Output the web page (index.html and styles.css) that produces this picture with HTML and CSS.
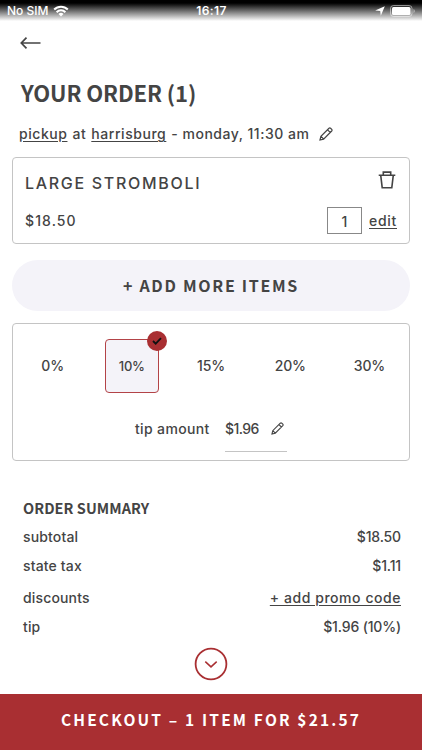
FILE: index.html
```html
<!DOCTYPE html>
<html lang="en">
<head>
    <meta charset="UTF-8">
    <meta name="viewport" content="width=device-width, initial-scale=1.0">
    <title>Your Order</title>
    <link rel="stylesheet" href="styles.css">
</head>
<body>

<!-- Status Bar -->
<div class="status-bar">
    <div class="status-left">
        <span>No SIM</span>
        <svg width="16" height="12" viewBox="0 0 16 12">
            <path d="M1.2 4.5a9.6 9.6 0 0 1 13.6 0M3.6 7.2a6.2 6.2 0 0 1 8.8 0" fill="none" stroke="#fff" stroke-width="2"/>
            <path d="M5.5 9.1a3.5 3.5 0 0 1 5 0L8 11.6z" fill="#fff"/>
        </svg>
    </div>
    <span class="status-time">16:17</span>
    <div class="status-right">
        <svg width="10" height="10" viewBox="0 0 10 10"><path d="M9.8.2L5.8 9.8 5.2 5 .2 4.6z" fill="#fff"/></svg>
        <svg width="26" height="12" viewBox="0 0 26 12">
            <rect x=".5" y=".5" width="21.5" height="11" rx="3" fill="none" stroke="#fff" stroke-opacity=".5"/>
            <rect x="2" y="2" width="18.5" height="8" rx="1.5" fill="#fff"/>
            <path d="M23.5 4v4q1.3-.6 1.3-2t-1.3-2z" fill="#fff" fill-opacity=".5"/>
        </svg>
    </div>
</div>

<header>
    <svg width="22" height="14" viewBox="0 0 22 14" fill="none" stroke="#444" stroke-width="1.7">
        <path d="M20.5 7H1.5M6.5 1.7L1.3 7l5.2 5.3"/>
    </svg>
</header>

<h1>YOUR ORDER (1)</h1>

<div class="pickup">
    <a>pickup</a><span class="at">at</span><a>harrisburg</a><span class="when">- monday, 11:30 am</span>
    <svg class="pencil" width="14" height="14" viewBox="0 0 14 14">
        <path d="M1 13l.9-3.6L10 1.3q.8-.7 1.6 0l1.1 1.1q.7.8 0 1.6L4.6 12.1zM8.6 2.8L11.2 5.4M2 9.4l2.6 2.6"/>
    </svg>
</div>

<!-- Order Item -->
<div class="card item">
    <div class="row">
        <h2>LARGE STROMBOLI</h2>
        <svg class="trash" width="18" height="18" viewBox="0 0 18 18">
            <path d="M.7 4.2h16.6M2.7 4.2l1.5 12.5h9.6l1.5-12.5M5.3 4V1.1h7.4V4"/>
        </svg>
    </div>
    <div class="row">
        <span class="price">$18.50</span>
        <div class="item-actions">
            <span class="quantity">1</span>
            <a class="edit">edit</a>
        </div>
    </div>
</div>

<button class="add-button">+ ADD MORE ITEMS</button>

<!-- Tip Options -->
<div class="card tip">
    <div class="tip-options">
        <span>0%</span>
        <span class="selected">10%
            <i class="check"><svg width="10" height="8" viewBox="0 0 10 8"><path d="M1 4l2.7 2.7L9 1.2" fill="none" stroke="#111" stroke-width="1.8"/></svg></i>
        </span>
        <span>15%</span>
        <span>20%</span>
        <span>30%</span>
    </div>
    <div class="tip-amount">
        <span class="tip-label">tip amount</span>
        <div class="tip-input">
            <span>$1.96</span>
            <svg class="pencil" width="13" height="13" viewBox="0 0 14 14">
                <path d="M1 13l.9-3.6L10 1.3q.8-.7 1.6 0l1.1 1.1q.7.8 0 1.6L4.6 12.1zM8.6 2.8L11.2 5.4M2 9.4l2.6 2.6"/>
            </svg>
        </div>
    </div>
</div>

<!-- Summary -->
<section class="summary">
    <h3>ORDER SUMMARY</h3>
    <div class="line"><span>subtotal</span><span class="value">$18.50</span></div>
    <div class="line"><span>state tax</span><span class="value">$1.11</span></div>
    <div class="line discounts"><span>discounts</span><a class="promo">+ add promo code</a></div>
    <div class="line"><span>tip</span><span class="value">$1.96 (10%)</span></div>
</section>

<div class="more">
    <svg width="34" height="34" viewBox="0 0 34 34" fill="none" stroke="#a92f32">
        <circle cx="17" cy="17" r="15.4" stroke-width="1.8"/>
        <path d="M11.3 14.6l5.7 5.3 5.7-5.3" stroke-width="1.5"/>
    </svg>
</div>

<footer class="checkout">CHECKOUT – 1 ITEM FOR $21.57</footer>

</body>
</html>
```
FILE: styles.css
```css
* {
    margin: 0;
    padding: 0;
    box-sizing: border-box;
}

body {
    background: #fff;
    color: #444;
    width: 422px;
    height: 750px;
    overflow: hidden;
    display: flex;
    flex-direction: column;
    font-family: 'Inter', sans-serif;
    font-size: 14px;
    font-weight: 450;
    line-height: 20px;
}

h1, h3, .add-button, .checkout {
    font-family: 'Noto Sans CJK SC', sans-serif;
    font-weight: bold;
    white-space: nowrap;
}

a {
    text-decoration: underline;
    text-underline-offset: 2px;
    text-decoration-thickness: 1px;
}

/* Status Bar */
.status-bar {
    height: 22px;
    padding: 0 6px 0 7px;
    display: grid;
    grid-template-columns: 1fr auto 1fr;
    align-items: center;
    color: #fff;
    font-size: 12px;
    background: linear-gradient(#000 3px, #1a1a1a 5px, #fff 21px);
}

.status-left, .status-right {
    display: flex;
    align-items: center;
    gap: 5px;
}

.status-left {
    gap: 4px;
}

.status-right {
    justify-content: flex-end;
    gap: 5px;
}

.status-time {
    font-weight: 600;
    letter-spacing: 0.4px;
}

header {
    height: 42px;
    padding: 14px 20px;
}

header svg {
    display: block;
}

h1 {
    height: 60px;
    padding-left: 21px;
    font-size: 22px;
    line-height: 57px;
    letter-spacing: -0.1px;
}

.pickup {
    height: 33px;
    padding: 0 0 13px 19px;
    display: flex;
    align-items: center;
    white-space: nowrap;
    letter-spacing: 0.55px;
}

.at {
    margin: 0 5px;
}

.when {
    margin: 0 10px 0 5px;
    letter-spacing: 0.5px;
}

.pencil, .trash {
    fill: none;
    stroke: #444;
    stroke-width: 1.2;
}

.trash {
    stroke-width: 1.6;
}

/* Cards */
.card {
    margin: 0 12px;
    border: 1.5px solid #c4c4c4;
    border-radius: 4px;
}

.item {
    height: 87px;
    padding: 12px 12px 9px;
    display: flex;
    flex-direction: column;
    justify-content: space-between;
}

.row {
    display: flex;
    justify-content: space-between;
    align-items: center;
}

h2 {
    font-size: 16px;
    font-weight: 450;
    line-height: 26px;
    letter-spacing: 1.7px;
}

.trash {
    margin: 0 1px 7px 0;
}

.price {
    letter-spacing: 1.1px;
}

.item-actions {
    display: flex;
    align-items: center;
    gap: 7px;
}

.quantity {
    width: 35px;
    height: 27px;
    padding-top: 2px;
    border: 1.5px solid #888;
    text-align: center;
    line-height: 24px;
}

.edit {
    letter-spacing: 0.7px;
}

.add-button {
    margin: 16px 12px 12px;
    padding-bottom: 2px;
    height: 51px;
    border: none;
    border-radius: 26px;
    background: #f4f3f9;
    color: #444;
    font-size: 16px;
    letter-spacing: 1.7px;
}

/* Tip */
.tip {
    height: 138px;
    padding-top: 15px;
}

.tip-options {
    display: grid;
    grid-template-columns: repeat(5, 1fr);
    justify-items: center;
}

.tip-options span {
    position: relative;
    width: 54px;
    height: 54px;
    line-height: 54px;
    text-align: center;
    letter-spacing: -0.2px;
}

.tip-options .selected {
    border: 1.5px solid #b34347;
    border-radius: 4px;
    background: #f4f3f9;
    line-height: 52px;
    font-size: 13px;
}

.check {
    position: absolute;
    top: -9px;
    right: -9px;
    width: 20px;
    height: 20px;
    border-radius: 50%;
    background: #a92f32;
    display: flex;
    align-items: center;
    justify-content: center;
}

.tip-amount {
    margin-top: 26px;
    padding-left: 122px;
    display: flex;
}

.tip-label {
    width: 90px;
    letter-spacing: 0.35px;
}

.tip-input {
    width: 62px;
    height: 33px;
    padding-right: 3px;
    border-bottom: 1.5px solid #c4c4c4;
    display: flex;
    justify-content: space-between;
    letter-spacing: -0.6px;
}

.tip-input svg {
    margin-top: 3px;
}

/* Summary */
.summary {
    height: 180px;
    padding: 37px 21px 0 23px;
}

h3 {
    font-size: 14.5px;
    line-height: 20px;
    letter-spacing: 0.05px;
}

.line {
    height: 29px;
    display: flex;
    align-items: center;
    justify-content: space-between;
    letter-spacing: 0.15px;
}

.line:nth-child(2) {
    margin-top: 4px;
}

.value {
    letter-spacing: -0.15px;
}

.promo {
    letter-spacing: 0.55px;
}

.discounts {
    margin-top: 3px;
}

.more {
    height: 53px;
    padding-top: 6px;
    text-align: center;
}

.checkout {
    height: 56px;
    background: #a92f32;
    color: #fff;
    text-align: center;
    font-size: 15.5px;
    line-height: 50px;
    letter-spacing: 2.15px;
}
```
